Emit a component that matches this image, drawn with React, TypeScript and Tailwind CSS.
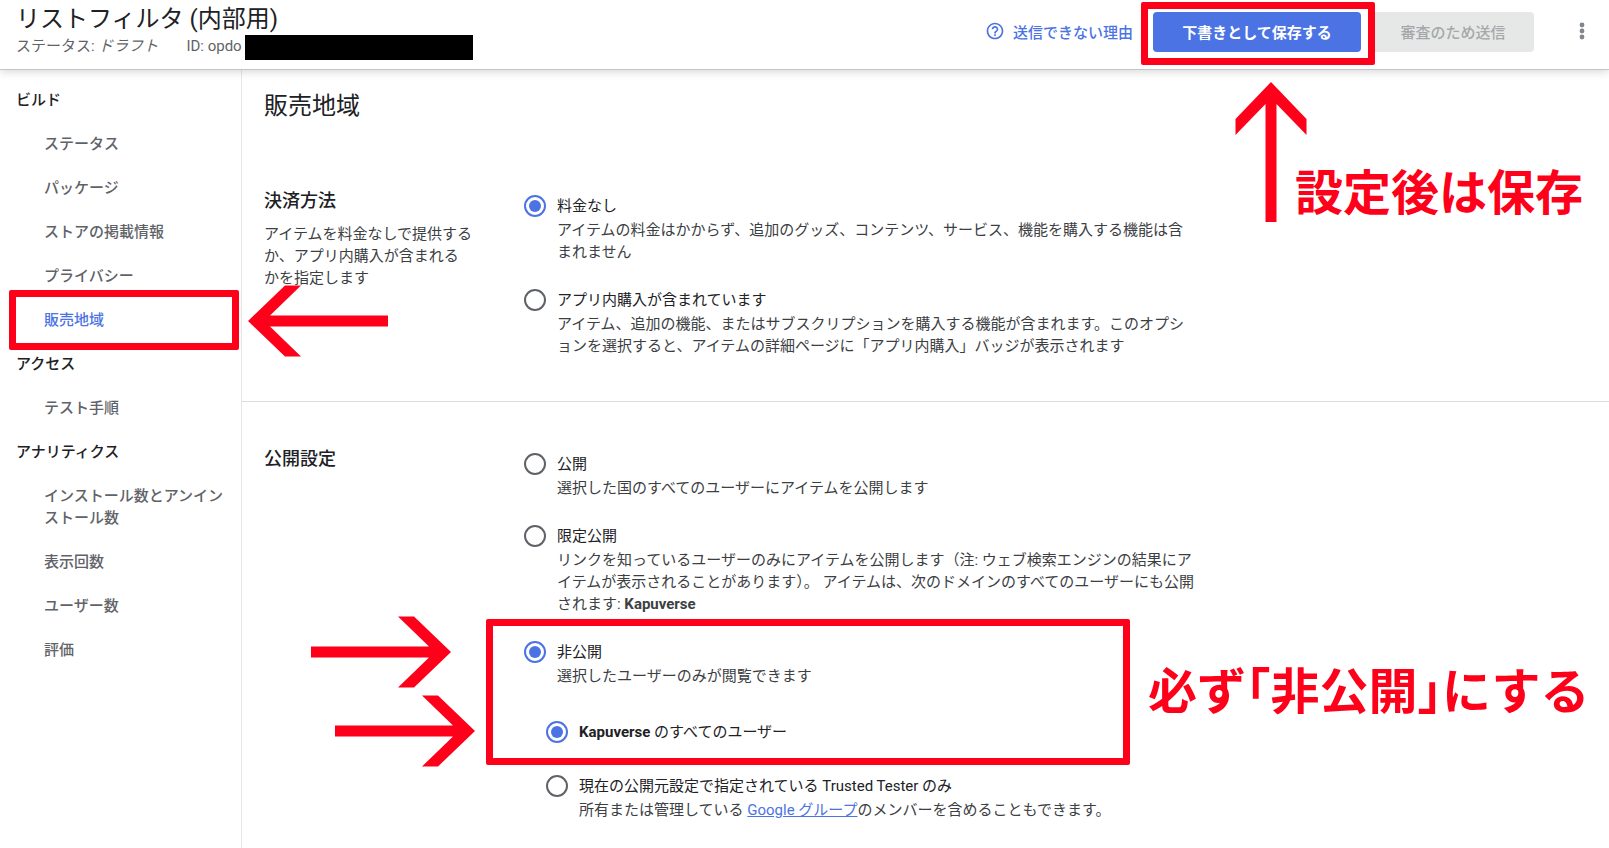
import { useState, type ReactNode } from 'react'
import clsx from 'clsx'

interface NavGroup {
  title: string
  items: string[]
}

const navGroups: NavGroup[] = [
  {
    title: 'ビルド',
    items: ['ステータス', 'パッケージ', 'ストアの掲載情報', 'プライバシー', '販売地域']
  },
  {
    title: 'アクセス',
    items: ['テスト手順']
  },
  {
    title: 'アナリティクス',
    items: ['インストール数とアンインストール数', '表示回数', 'ユーザー数', '評価']
  }
]

const activeItem = '販売地域'

// Arrow pointing up, rotated through className
function Arrow({ className }: { className: string }) {
  return (
    <svg
      viewBox="0 0 72 140"
      aria-hidden="true"
      className={clsx('pointer-events-none absolute z-20 h-[140px] w-[72px] fill-[#ff001a]', className)}
    >
      <path d="M36 0 L71.5 37 V53 L41.5 22 V140 H30.5 V22 L0.5 53 V37 Z" />
    </svg>
  )
}

function Frame({ className }: { className: string }) {
  return (
    <div
      className={clsx('pointer-events-none absolute z-10 rounded-xs border-7 border-[#ff001a]', className)}
    />
  )
}

interface OptionProps {
  id: string
  name: string
  checked: boolean
  onSelect: (id: string) => void
  label: ReactNode
  children?: ReactNode
}

function Option({ id, name, checked, onSelect, label, children }: OptionProps) {
  return (
    <div className="flex items-start gap-[11px]">
      <input
        type="radio"
        id={id}
        name={name}
        checked={checked}
        onChange={() => onSelect(id)}
        className="mt-[2px] grid size-[22px] shrink-0 cursor-pointer appearance-none place-items-center rounded-full border-2 border-[#5f6368] before:size-3 before:rounded-full checked:border-[#4c73e4] checked:before:bg-[#4c73e4]"
      />
      <div className="max-w-[644px]">
        <label htmlFor={id} className="block cursor-pointer leading-[26px] text-[#202124]">
          {label}
        </label>
        {children && <p className="text-[#3c4043]">{children}</p>}
      </div>
    </div>
  )
}

function Header() {
  return (
    <header className="relative z-10 flex h-[70px] items-start justify-between border-b border-[#c4c6c6] bg-white pl-4 shadow-[0_2px_8px_rgba(60,64,67,0.2)]">
      <div className="pt-1">
        <div className="text-2xl leading-[31px] text-[#202124]">リストフィルタ (内部用)</div>
        <div className="flex h-[25px] items-start text-[#5f6368]">
          <span>
            ステータス: <em>ドラフト</em>
          </span>
          <span className="ml-7">ID: opdo</span>
          <span className="ml-[3px] h-[25px] w-[228px] bg-black" />
        </div>
      </div>

      <div className="flex items-center pt-3">
        <a href="#reason" className="mr-5 flex items-center gap-2 pt-[2px] font-medium text-[#4c73e4]">
          <svg viewBox="0 0 24 24" className="mb-1 size-5 fill-current" aria-hidden="true">
            <path d="M11 18h2v-2h-2v2zm1-16C6.48 2 2 6.48 2 12s4.48 10 10 10 10-4.48 10-10S17.52 2 12 2zm0 18c-4.41 0-8-3.59-8-8s3.59-8 8-8 8 3.59 8 8-3.59 8-8 8zm0-14c-2.21 0-4 1.79-4 4h2c0-1.1.9-2 2-2s2 .9 2 2c0 2-3 1.75-3 5h2c0-2.25 3-2.5 3-5 0-2.21-1.79-4-4-4z" />
          </svg>
          送信できない理由
        </a>
        <div className="relative">
          <button
            type="button"
            className="h-10 min-w-[208px] rounded bg-[#4c73e4] px-6 pt-[2px] font-bold text-white"
          >
            下書きとして保存する
          </button>
          <Frame className="-top-[10px] -right-[14px] -bottom-[13px] -left-3" />
          <Arrow className="top-[70px] left-[82px]" />
          <strong className="absolute top-[146px] left-[142px] text-5xl leading-[72px] font-bold whitespace-nowrap text-[#ff001a]">
            設定後は保存
          </strong>
        </div>
        <button
          type="button"
          disabled
          className="ml-[11px] h-10 min-w-[162px] rounded bg-[#e6e8e8] px-6 pt-[2px] font-medium text-[#a5a8a8]"
        >
          審査のため送信
        </button>
        <button type="button" aria-label="その他" className="mr-[15px] ml-9 pb-[2px]">
          <svg viewBox="0 0 24 24" className="size-6 fill-[#80868b]" aria-hidden="true">
            <circle cx="12" cy="6" r="2.4" />
            <circle cx="12" cy="12" r="2.4" />
            <circle cx="12" cy="18" r="2.4" />
          </svg>
        </button>
      </div>
    </header>
  )
}

function Sidebar() {
  return (
    <nav className="w-[242px] shrink-0 border-r border-[#e4e6e8] pt-2">
      {navGroups.map((group) => (
        <div key={group.title}>
          <h2 className="py-[11px] pl-4 font-medium text-[#202124]">{group.title}</h2>
          <ul>
            {group.items.map((item) => {
              const isActive = item === activeItem
              return (
                <li key={item} className="relative">
                  <a
                    href="#nav"
                    aria-current={isActive ? 'page' : undefined}
                    className={clsx(
                      'block py-[11px] pr-2 pl-11 font-medium',
                      isActive ? 'text-[#4c73e4]' : 'text-[#5f6368]'
                    )}
                  >
                    {item}
                  </a>
                  {isActive && (
                    <>
                      <Frame className="-top-2 right-[2px] -bottom-2 left-[9px]" />
                      <Arrow className="-top-[47px] left-[282px] -rotate-90" />
                    </>
                  )}
                </li>
              )
            })}
          </ul>
        </div>
      ))}
    </nav>
  )
}

export default function App() {
  const [payment, setPayment] = useState('free')
  const [visibility, setVisibility] = useState('private')
  const [audience, setAudience] = useState('domain')

  return (
    <div
      lang="ja"
      className="flex min-h-screen flex-col overflow-x-hidden bg-white font-[Roboto,'Noto_Sans_CJK_JP',sans-serif] text-[15px] leading-[22px]"
    >
      <Header />
      <div className="flex flex-1">
        <Sidebar />
        <main className="min-w-0 flex-1 pt-5">
          <h1 className="pl-[22px] text-2xl leading-8 text-[#202124]">販売地域</h1>

          <section className="mt-[67px] flex border-b border-[#dadce0] pb-11 pl-[22px]">
            <div className="w-[260px] shrink-0">
              <h2 className="text-lg leading-6 font-medium text-[#202124]">決済方法</h2>
              <p className="mt-[10px] text-[#3c4043]">
                アイテムを料金なしで提供する
                <br />
                か、アプリ内購入が含まれる
                <br />
                かを指定します
              </p>
            </div>
            <div className="flex flex-col gap-6 pt-1">
              <Option id="free" name="payment" checked={payment === 'free'} onSelect={setPayment} label="料金なし">
                アイテムの料金はかからず、追加のグッズ、コンテンツ、サービス、機能を購入する機能は含
                <br />
                まれません
              </Option>
              <Option
                id="in-app"
                name="payment"
                checked={payment === 'in-app'}
                onSelect={setPayment}
                label="アプリ内購入が含まれています"
              >
                アイテム、追加の機能、またはサブスクリプションを購入する機能が含まれます。このオプシ
                <br />
                ョンを選択すると、アイテムの詳細ページに「アプリ内購入」バッジが表示されます
              </Option>
            </div>
          </section>

          <section className="flex pt-[45px] pb-4 pl-[22px]">
            <div className="w-[260px] shrink-0">
              <h2 className="text-lg leading-6 font-medium text-[#202124]">公開設定</h2>
            </div>
            <div className="flex flex-col gap-6 pt-1">
              <Option
                id="public"
                name="visibility"
                checked={visibility === 'public'}
                onSelect={setVisibility}
                label="公開"
              >
                選択した国のすべてのユーザーにアイテムを公開します
              </Option>
              <Option
                id="unlisted"
                name="visibility"
                checked={visibility === 'unlisted'}
                onSelect={setVisibility}
                label="限定公開"
              >
                リンクを知っているユーザーのみにアイテムを公開します（注: ウェブ検索エンジンの結果にアイテムが表示されることがあります）。 アイテムは、次のドメインのすべてのユーザーにも公開されます: <b>Kapuverse</b>
              </Option>
              <div className="relative">
                <Option
                  id="private"
                  name="visibility"
                  checked={visibility === 'private'}
                  onSelect={setVisibility}
                  label="非公開"
                >
                  選択したユーザーのみが閲覧できます
                </Option>
                <div className="mt-8 flex flex-col gap-7 pl-[22px]">
                  <Option
                    id="domain"
                    name="audience"
                    checked={audience === 'domain'}
                    onSelect={setAudience}
                    label={
                      <>
                        <b>Kapuverse</b> のすべてのユーザー
                      </>
                    }
                  />
                  <Option
                    id="testers"
                    name="audience"
                    checked={audience === 'testers'}
                    onSelect={setAudience}
                    label="現在の公開元設定で指定されている Trusted Tester のみ"
                  >
                    所有または管理している{' '}
                    <a href="#groups" className="text-[#4c73e4] underline">
                      Google グループ
                    </a>
                    のメンバーを含めることもできます。
                  </Option>
                </div>
                <Frame className="-top-5 -left-[38px] h-[146px] w-[644px]" />
                <Arrow className="-top-[57px] -left-[179px] rotate-90" />
                <Arrow className="top-[22px] -left-[155px] rotate-90" />
                <strong className="absolute top-[18px] left-[624px] text-[49px] leading-[72px] font-bold whitespace-nowrap text-[#ff001a] [font-feature-settings:'halt']">
                  必ず「非公開」にする
                </strong>
              </div>
            </div>
          </section>
        </main>
      </div>
    </div>
  )
}
